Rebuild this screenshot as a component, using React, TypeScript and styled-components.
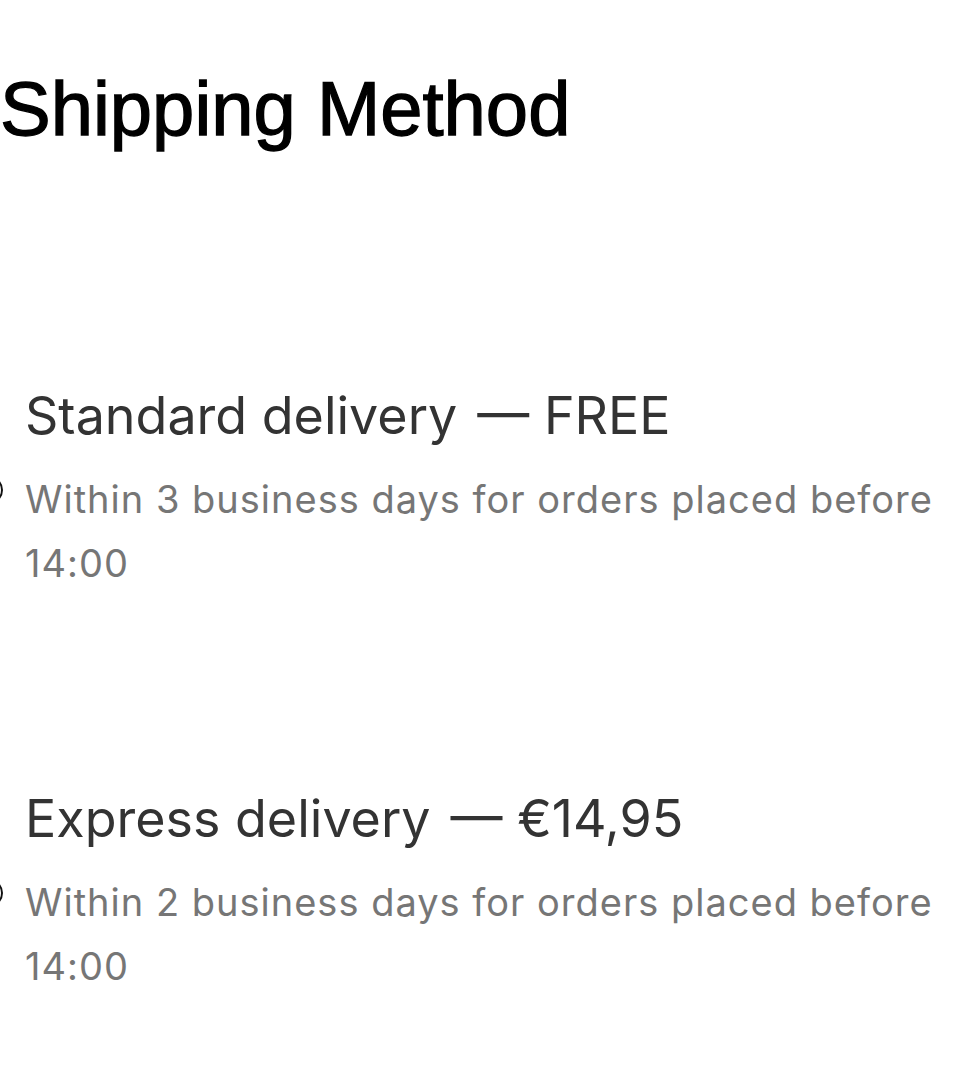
import React from "react";
import styled, { createGlobalStyle } from "styled-components";

const Global = createGlobalStyle`
  html, body { margin: 0; padding: 0; background: #ffffff; }
  body { font-family: "Inter", "Liberation Sans", sans-serif; overflow: hidden; }
`;

const Page = styled.main`
  width: 961px;
  min-height: 1088px;
  padding-top: 64px;
  box-sizing: border-box;
`;

const Title = styled.h1`
  margin: 0;
  font-family: "Liberation Sans", Arial, sans-serif;
  font-weight: 400;
  font-size: 76px;
  line-height: 90px;
  color: #000;
  -webkit-text-stroke: 1.3px #000;
`;

const OptionList = styled.div`
  display: flex;
  flex-direction: column;
  gap: 192px;
  margin-top: 230px;
`;

const Option = styled.label`
  display: flex;
  align-items: center;
  gap: 22px;
  margin-left: -25px;
`;

const Radio = styled.span`
  flex: none;
  width: 24px;
  height: 24px;
  border: 2px solid #111;
  border-radius: 50%;
`;

const Text = styled.div`
  display: flex;
  flex-direction: column;
`;

const Name = styled.div`
  font-family: "Inter", sans-serif;
  font-size: 52px;
  line-height: 64px;
  color: #333333;
  white-space: nowrap;
`;

const Price = styled.span`
  margin-left: 20px;
`;

const Desc = styled.div`
  margin-top: 19px;
  font-family: "Inter", sans-serif;
  font-size: 38px;
  line-height: 64px;
  letter-spacing: 1px;
  color: #767676;
  width: 935px;
`;

const options = [
  { name: "Standard delivery", price: "— FREE", desc: "Within 3 business days for orders placed before 14:00" },
  { name: "Express delivery", price: "— €14,95", desc: "Within 2 business days for orders placed before 14:00" },
];

export default function App() {
  return (
    <Page>
      <Global />
      <Title>Shipping Method</Title>
      <OptionList>
        {options.map((o) => (
          <Option key={o.name}>
            <Radio />
            <Text>
              <Name>
                {o.name}
                <Price>{o.price}</Price>
              </Name>
              <Desc>{o.desc}</Desc>
            </Text>
          </Option>
        ))}
      </OptionList>
    </Page>
  );
}
